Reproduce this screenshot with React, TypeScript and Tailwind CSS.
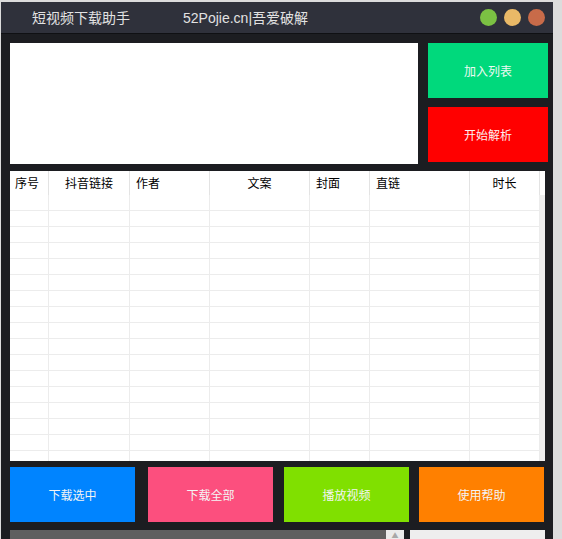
const cjk = { fontFamily: '"Noto Sans CJK SC", "Liberation Sans", sans-serif' };

const columns = [
  { title: "序号", w: "w-[39px]", align: "justify-start pl-[5px]" },
  { title: "抖音链接", w: "w-[81px]", align: "justify-center" },
  { title: "作者", w: "w-[80px]", align: "justify-start pl-[6px]" },
  { title: "文案", w: "w-[100px]", align: "justify-center" },
  { title: "封面", w: "w-[60px]", align: "justify-start pl-[6px]" },
  { title: "直链", w: "w-[100px]", align: "justify-start pl-[6px]" },
  { title: "时长", w: "w-[70px]", align: "justify-center" },
];

const actions = [
  { label: "下载选中", bg: "bg-[#0084ff]", ml: "ml-0" },
  { label: "下载全部", bg: "bg-[#fc4f7e]", ml: "ml-[13px]" },
  { label: "播放视频", bg: "bg-[#80e000]", ml: "ml-[11px]" },
  { label: "使用帮助", bg: "bg-[#ff8000]", ml: "ml-[10px]" },
];

const rows = Array.from({ length: 17 });

function TitleBar() {
  return (
    <div className="flex h-[31px] shrink-0 items-center bg-[#2f313b] pr-[8px] text-[14px] text-[#e2e2e2]">
      <span className="ml-[31px]">短视频下载助手</span>
      <span className="ml-[53px]">
        <span style={{ fontFamily: '"Liberation Sans", sans-serif' }}>52Pojie.cn|</span>吾爱破解
      </span>
      <div className="ml-auto flex gap-[7px]">
        <div className="h-[17px] w-[17px] rounded-full bg-[#7bc143]" />
        <div className="h-[17px] w-[17px] rounded-full bg-[#e9b967]" />
        <div className="h-[17px] w-[17px] rounded-full bg-[#c86b49]" />
      </div>
    </div>
  );
}

function VideoTable() {
  return (
    <div className="mt-[7px] flex h-[290px] w-[535px] shrink-0 overflow-hidden bg-white">
      <div className="flex w-[530px] flex-col">
        <div className="flex h-[24px] shrink-0 text-[12px] text-black">
          {columns.map((c) => (
            <div key={c.title} className={`${c.w} flex items-center ${c.align} border-r border-[#e3e3e3]`}>
              {c.title}
            </div>
          ))}
        </div>
        {rows.map((_, i) => (
          <div key={i} className="flex h-[16px] shrink-0 border-b border-[#ececec]">
            {columns.map((c) => (
              <div key={c.title} className={`${c.w} border-r border-[#ececec]`} />
            ))}
          </div>
        ))}
      </div>
      <div className="mt-[24px] w-[5px] bg-[#eeeeee]" />
    </div>
  );
}

export default function App() {
  return (
    <div className="h-[539px] w-[562px] overflow-hidden bg-[#dcdcdc]" style={cjk}>
      <div className="ml-[1px] mt-[2px] flex h-[537px] w-[552px] flex-col overflow-hidden bg-[#1c1d21]">
        <TitleBar />
        <div className="h-[1px] shrink-0 bg-[#0f1013]" />
        <div className="flex shrink-0 flex-col pl-[9px] pr-[5px] pt-[9px]">
          <div className="flex gap-[10px]">
            <div className="h-[121px] w-[408px] bg-white" />
            <div className="flex w-[120px] flex-col gap-[9px]">
              <button className="flex h-[55px] items-center justify-center bg-[#00d97c] text-[12px] text-[#eefaf3]">
                加入列表
              </button>
              <button className="flex h-[55px] items-center justify-center bg-[#ff0000] text-[12px] text-[#fdf0f0]">
                开始解析
              </button>
            </div>
          </div>

          <VideoTable />

          <div className="mt-[6px] flex">
            {actions.map((a) => (
              <button
                key={a.label}
                className={`${a.ml} flex h-[55px] w-[125px] items-center justify-center ${a.bg} text-[12px] text-[#f4f4f4]`}
              >
                {a.label}
              </button>
            ))}
          </div>

          <div className="mt-[8px] flex h-[20px] gap-[6px]">
            <div className="flex w-[394px] bg-[#5f5f5f]">
              <div className="ml-auto flex w-[18px] justify-center bg-[#ebebeb] pt-[2px] text-[7px] leading-none text-[#a8a8a8]">
                ▲
              </div>
            </div>
            <div className="w-[135px] bg-[#eeeeee]" />
          </div>
        </div>
      </div>
    </div>
  );
}
